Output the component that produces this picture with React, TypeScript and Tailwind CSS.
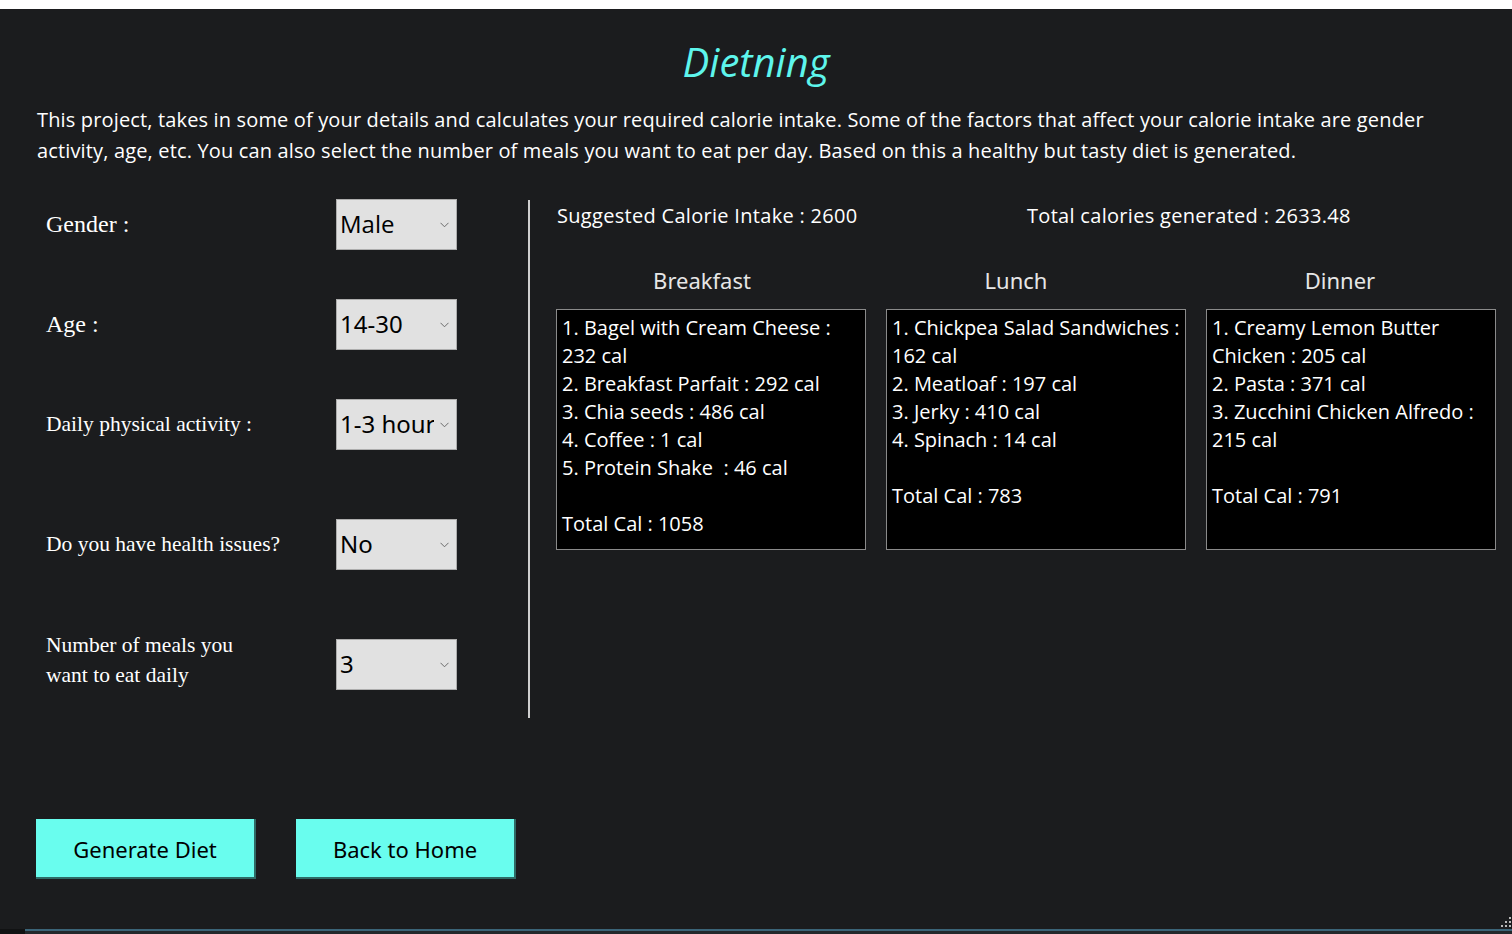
import React from "react";

const comic = "font-['Open_Sans',sans-serif]";
const segoe = "font-['Noto_Sans',sans-serif]";
const serif = "font-['Liberation_Serif',serif]";

const fields = [
  { label: ["Gender :"], value: "Male", size: "text-[24px]", valueFont: comic, mt: "mt-0", shift: "" },
  { label: ["Age :"], value: "14-30", size: "text-[24px]", valueFont: segoe, mt: "mt-[49px]", shift: "" },
  { label: ["Daily physical activity :"], value: "1-3 hours", size: "text-[21.5px]", valueFont: segoe, mt: "mt-[49px]", shift: "" },
  { label: ["Do you have health issues?"], value: "No", size: "text-[21.5px]", valueFont: segoe, mt: "mt-[69px]", shift: "" },
  { label: ["Number of meals you", "want to eat daily"], value: "3", size: "text-[21.5px]", valueFont: segoe, mt: "mt-[69px]", shift: "-mt-[9px]" },
];

const meals = [
  {
    name: "Breakfast",
    width: "w-[310px]",
    head: "pr-[18px]",
    lines: [
      "1. Bagel with Cream Cheese :",
      "232 cal",
      "2. Breakfast Parfait : 292 cal",
      "3. Chia seeds : 486 cal",
      "4. Coffee : 1 cal",
      "5. Protein Shake  : 46 cal",
      "",
      "Total Cal : 1058",
    ],
  },
  {
    name: "Lunch",
    width: "w-[300px]",
    head: "pr-[40px]",
    lines: [
      "1. Chickpea Salad Sandwiches :",
      "162 cal",
      "2. Meatloaf : 197 cal",
      "3. Jerky : 410 cal",
      "4. Spinach : 14 cal",
      "",
      "Total Cal : 783",
    ],
  },
  {
    name: "Dinner",
    width: "w-[290px]",
    head: "pr-[22px]",
    lines: [
      "1. Creamy Lemon Butter",
      "Chicken : 205 cal",
      "2. Pasta : 371 cal",
      "3. Zucchini Chicken Alfredo :",
      "215 cal",
      "",
      "Total Cal : 791",
    ],
  },
];

function Chevron() {
  return (
    <svg width="9" height="6" viewBox="0 0 9 6" className="shrink-0">
      <path d="M0.5 0.8 L4.5 4.8 L8.5 0.8" fill="none" stroke="#6b6b6b" strokeWidth="1" />
    </svg>
  );
}

function Dropdown({ value, font }: { value: string; font: string }) {
  return (
    <div className="flex h-[51px] w-[121px] shrink-0 items-center border border-[#adadad] bg-[#e1e1e1] pl-[3px] pr-[7px]">
      <span className={`-mt-[2px] w-[94px] overflow-hidden whitespace-nowrap text-[24px] leading-[34px] text-black ${font}`}>
        {value}
      </span>
      <div className="ml-auto">
        <Chevron />
      </div>
    </div>
  );
}

function Grip() {
  return (
    <svg width="10" height="10" viewBox="0 0 10 10">
      <rect x="8" y="0" width="2" height="2" fill="#b8b8b8" />
      <rect x="4" y="4" width="2" height="2" fill="#b8b8b8" />
      <rect x="8" y="4" width="2" height="2" fill="#b8b8b8" />
      <rect x="0" y="8" width="2" height="2" fill="#b8b8b8" />
      <rect x="4" y="8" width="2" height="2" fill="#b8b8b8" />
      <rect x="8" y="8" width="2" height="2" fill="#b8b8b8" />
    </svg>
  );
}

export default function App() {
  return (
    <div className="flex h-[934px] w-[1512px] flex-col overflow-hidden bg-white">
      <div className="h-[9px] shrink-0 bg-white" />
      <div className="relative flex flex-1 flex-col bg-[#1b1c1e] text-white">
        <h1
          className={`mt-[29px] text-center text-[40px] font-medium italic leading-[48px] text-[#5ef5ec] ${comic}`}
        >
          Dietning
        </h1>

        <p className={`mt-[18px] pl-[37px] text-[20px] leading-[31px] tracking-[0.15px] text-white ${comic}`}>
          This project, takes in some of your details and calculates your required calorie intake. Some of the factors that affect your calorie intake are gender
          <br />
          activity, age, etc. You can also select the number of meals you want to eat per day. Based on this a healthy but tasty diet is generated.
        </p>

        <div className="mt-[33px] flex">
          <div className="flex w-[528px] flex-col pl-[46px]">
            {fields.map((f) => (
              <div key={f.value} className={`flex h-[51px] items-center ${f.mt}`}>
                <div className={`-mt-[1px] w-[290px] leading-[30px] text-white ${serif} ${f.size} ${f.shift}`}>
                  {f.label.map((l) => (
                    <div key={l}>{l}</div>
                  ))}
                </div>
                <Dropdown value={f.value} font={f.valueFont} />
              </div>
            ))}
          </div>

          <div className="mt-[1px] h-[518px] w-[2px] bg-[#cfcfcf]" />

          <div className="ml-[26px] flex flex-col">
            <div className={`mt-[3px] flex text-[20px] leading-[28px] tracking-[0.3px] text-white ${comic}`}>
              <span className="w-[471px] pl-[1px]">Suggested Calorie Intake : 2600</span>
              <span>Total calories generated : 2633.48</span>
            </div>

            <div className="mt-[35px] flex gap-[20px]">
              {meals.map((m) => (
                <div key={m.name} className={`flex flex-col ${m.width}`}>
                  <div className={`text-center text-[22px] leading-[30px] text-[#e6e6e6] ${segoe} ${m.head}`}>
                    {m.name}
                  </div>
                  <div
                    className={`mt-[14px] h-[241px] border border-[#8a8a8a] bg-black px-[5px] pt-[4px] text-[20px] leading-[28px] text-white ${comic}`}
                  >
                    {m.lines.map((l, i) => (
                      <div key={i} className="h-[28px] whitespace-pre">
                        {l}
                      </div>
                    ))}
                  </div>
                </div>
              ))}
            </div>
          </div>
        </div>

        <div className="mt-auto mb-[50px] flex gap-[40px] pl-[36px]">
          {["Generate Diet", "Back to Home"].map((b) => (
            <button
              key={b}
              className={`h-[60px] w-[220px] border-r-2 border-b-2 border-[#2e6b66] bg-[#69fdee] pt-[3px] text-[22px] text-black ${segoe}`}
            >
              {b}
            </button>
          ))}
        </div>

        <div className="absolute right-[1px] bottom-[7px]">
          <Grip />
        </div>
        <div className="flex h-[5px] shrink-0">
          <div className="w-[25px] bg-[#111213]" />
          <div className="flex flex-1 flex-col">
            <div className="h-[2px] bg-[#3b6478]" />
            <div className="flex-1 bg-[#23282b]" />
          </div>
        </div>
      </div>
    </div>
  );
}
